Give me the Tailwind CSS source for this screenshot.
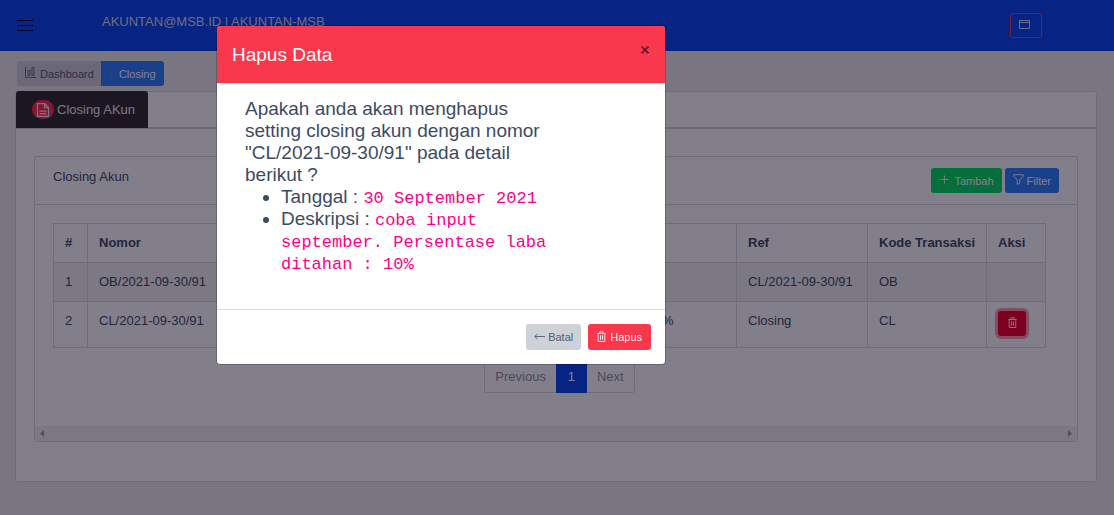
<!DOCTYPE html>
<html lang="id">
<head>
<meta charset="utf-8">
<meta name="viewport" content="width=device-width, initial-scale=1">
<title>Closing Akun</title>
<script src="https://cdn.jsdelivr.net/npm/@tailwindcss/browser@4"></script>
</head>
<body class="min-h-screen overflow-x-hidden bg-[#ebedef] font-['Liberation_Sans',Arial,sans-serif] text-[13px] leading-5 text-[#3c4b64]">

<header class="flex h-[51px] items-start justify-between bg-[#0746f3] pr-[72px] pl-4 text-white">
  <div class="flex items-start">
    <button type="button" aria-label="Menu" class="mt-4 text-[#000015]">
      <svg class="h-[18px] w-[18px]" viewBox="0 0 18 18" stroke="currentColor" stroke-width="1" fill="none"><path d="M1 4.500h16M1 9.500h16M1 14.500h16"/></svg>
    </button>
    <span class="mt-3 ml-[68px] text-[#d8dbe0]">AKUNTAN@MSB.ID | AKUNTAN-MSB</span>
  </div>
  <button type="button" aria-label="Jendela" class="mt-[13px] flex h-[25px] w-8 items-start rounded-[3px] border border-[#f9374d] pt-[6px] pl-2">
    <svg class="h-[10px] w-[11px]" viewBox="0 0 11 10" fill="none" stroke="currentColor" stroke-opacity=".8"><path d="M.5.5h10v8H.5zM.5 2.500h10"/></svg>
  </button>
</header>

<main class="px-4 pt-[10px] pb-[33px]">
  <nav aria-label="Breadcrumb" class="flex h-[25px] pl-px text-[11px]">
    <a href="#" class="flex items-center gap-1 rounded-l-[3px] bg-[#ced2d8] pr-[7px] pl-2 text-[#4f5d73]">
      <svg class="-mt-[2px] h-[11px] w-[11px]" viewBox="0 0 11 11" fill="none" stroke="currentColor"><path d="M.5 0v10.500H11M3 3.500h2v5H3zM7 .5h2v8H7z" stroke-width=".8"/></svg>
      Dashboard</a>
    <a href="#" class="flex items-center gap-[7px] rounded-r-[3px] bg-[#2d80ff] px-2 text-white"><span class="text-[#768192]">/</span>Closing</a>
  </nav>

  <section class="mt-[5px] mr-px -ml-px rounded-[3px] border border-[#d8dbe0] bg-white">
    <div class="flex h-[37px] border-b-2 border-[#d0d3d8]">
      <a href="#" class="-mt-px flex h-[37px] items-center gap-[3px] rounded-t-[3px] bg-[#2f2c2f] pr-[13px] pl-4 text-[#ebedef]">
        <span class="flex h-[19px] w-[22px] items-center justify-center rounded-full bg-[#ff2d50]">
          <svg class="h-[14px] w-[14px]" viewBox="0 0 14 14" fill="none" stroke="currentColor" stroke-width="1.200"><path d="M1.500.6h7l4 4v8.800h-11zM8.500.6v4h4M3.500 8.200h7M3.500 10.700h7"/></svg>
        </span>
        Closing AKun
      </a>
    </div>
    <div class="px-[18px] pt-[27px] pb-[39px]">
      <div class="rounded-[3px] border border-[#d8dbe0]">
        <div class="flex h-12 justify-between border-b border-[#d8dbe0] px-[18px] pt-[11px]">
          <h2 class="-mt-px">Closing Akun</h2>
          <div class="flex gap-[3px] text-[11px] text-white">
            <button type="button" class="flex h-[25px] items-center gap-1 rounded-[3px] bg-[#00dc65] px-2">
              <svg class="-mt-[2px] h-[11px] w-[11px]" viewBox="0 0 11 11" fill="none" stroke="currentColor" stroke-width=".8"><path d="M5.500 1.500v8M1.500 5.500h8"/></svg>Tambah</button>
            <button type="button" class="flex h-[25px] items-center gap-[3px] rounded-[3px] bg-[#2d80ff] px-2">
              <svg class="-mt-[2px] h-[11px] w-[11px]" viewBox="0 0 11 11" fill="none" stroke="currentColor" stroke-width=".9"><path d="M.8.700h9.400v1.500L6.800 6v3.200L4.300 10.400V6L.8 2.200z"/></svg>Filter</button>
          </div>
        </div>
        <div class="px-[18px] pt-[18px]">
          <table class="w-[calc(100%-13px)] table-fixed border-collapse text-left whitespace-nowrap [&_td]:border [&_td]:border-[#d8dbe0] [&_td]:px-[11px] [&_td]:pt-[9px] [&_td]:align-top [&_th]:border [&_th]:border-[#d8dbe0] [&_th]:px-[11px]">
            <colgroup><col class="w-[34px]"><col class="w-[132px]"><col class="w-[134px]"><col><col class="w-[131px]"><col class="w-[119px]"><col class="w-[59px]"></colgroup>
            <thead><tr class="h-[39px]"><th>#</th><th>Nomor</th><th>Tanggal</th><th>Deskripsi</th><th>Ref</th><th>Kode Transaksi</th><th>Aksi</th></tr></thead>
            <tbody>
              <tr class="h-[39px] bg-[#f2f2f2]"><td>1</td><td>OB/2021-09-30/91</td><td>30 September 2021</td><td></td><td>CL/2021-09-30/91</td><td>OB</td><td></td></tr>
              <tr class="h-[46px]"><td>2</td><td>CL/2021-09-30/91</td><td>30 September 2021</td><td>coba input september. Persentase laba ditahan : 10%</td><td>Closing</td><td>CL</td>
                <td><button type="button" aria-label="Hapus" class="flex h-[25px] w-7 items-center justify-center rounded-[3px] bg-[#f00028] text-white ring-3 ring-[#f9374d]/50">
                  <svg class="-mt-[2px] h-[11px] w-[9px]" viewBox="0 0 9 11" fill="none" stroke="currentColor" stroke-width=".9"><path d="M.3 2.500h8.400M2.800 2.500V.8h3.400v1.700M1.200 2.500v8h6.600v-8M3.500 4.300v4.500M5.500 4.300v4.500"/></svg></button></td></tr>
            </tbody>
          </table>
          <nav aria-label="Halaman" class="mt-[13px] flex h-8 justify-center pl-[7px]">
            <button type="button" disabled class="rounded-l-[3px] border border-r-0 border-[#d8dbe0] px-[10px] text-[#8a93a2]">Previous</button>
            <button type="button" class="w-[31px] bg-[#0746f3] text-white">1</button>
            <button type="button" disabled class="rounded-r-[3px] border border-l-0 border-[#d8dbe0] px-[10px] text-[#8a93a2]">Next</button>
          </nav>
        </div>
        <div class="mt-[33px] flex h-[15px] items-center justify-between bg-[#f1f1f1] px-[5px] text-[#a3a3a3]">
          <svg class="h-[7px] w-1" viewBox="0 0 4 7" fill="currentColor"><path d="M4 0v7L0 3.500z"/></svg>
          <svg class="h-[7px] w-1" viewBox="0 0 4 7" fill="currentColor"><path d="M0 0v7l4-3.500z"/></svg>
        </div>
      </div>
    </div>
  </section>
</main>

<div class="fixed inset-0 bg-[#070015]/50"></div>
<div role="dialog" aria-modal="true" aria-labelledby="judul" class="absolute top-[26px] left-[217px] w-[448px] max-w-full rounded-[3px] bg-white outline outline-black/20">
  <div class="flex h-[58px] items-start justify-between rounded-t-[3px] border-b border-[#d8dbe0] bg-[#f9374d] px-[15px] pt-[17px]">
    <h1 id="judul" class="text-[19px] leading-6 text-white">Hapus Data</h1>
    <button type="button" aria-label="Tutup" class="mt-[2px] text-[#6b1828]">
      <svg class="h-[10px] w-[10px]" viewBox="0 0 10 10" fill="none"><path d="M1.500 2.500l7 7M8.500 2.500l-7 7" stroke="#fff" stroke-opacity=".6"/><path d="M1.500 1.500l7 7M8.500 1.500l-7 7" stroke="currentColor" stroke-width="1.800"/></svg>
    </button>
  </div>
  <div class="h-[225px] pt-[14px] pr-28 pl-7 text-[19px] leading-[22px]">
    <p>Apakah anda akan menghapus setting closing akun dengan nomor "CL/2021-09-30/91" pada detail berikut ?</p>
    <ul class="list-disc pl-9">
      <li>Tanggal : <code class="font-['Liberation_Mono',monospace] text-[17px] leading-none text-[#ff0087]">30 September 2021</code></li>
      <li>Deskripsi : <code class="font-['Liberation_Mono',monospace] text-[17px] leading-none text-[#ff0087]">coba input september. Persentase laba ditahan : 10%</code></li>
    </ul>
  </div>
  <div class="flex justify-end gap-[7px] border-t border-[#d8dbe0] p-[14px] text-[11px]">
    <button type="button" class="flex h-[26px] items-center gap-[3px] rounded-[3px] bg-[#ced2d8] px-2 text-[#4f5d73]">
      <svg class="-mt-[2px] h-[11px] w-[11px]" viewBox="0 0 11 11" fill="none" stroke="currentColor" stroke-width=".9"><path d="M11 5.500H.8M3.500 2.800L.8 5.500l2.700 2.700"/></svg>Batal</button>
    <button type="button" class="flex h-[26px] items-center gap-1 rounded-[3px] bg-[#f9374d] px-[9px] text-white">
      <svg class="-mt-[2px] h-[11px] w-[9px]" viewBox="0 0 9 11" fill="none" stroke="currentColor" stroke-width=".9"><path d="M.3 2.500h8.400M2.800 2.500V.8h3.400v1.700M1.200 2.500v8h6.600v-8M3.500 4.300v4.500M5.500 4.300v4.500"/></svg>Hapus</button>
  </div>
</div>
</body>
</html>
